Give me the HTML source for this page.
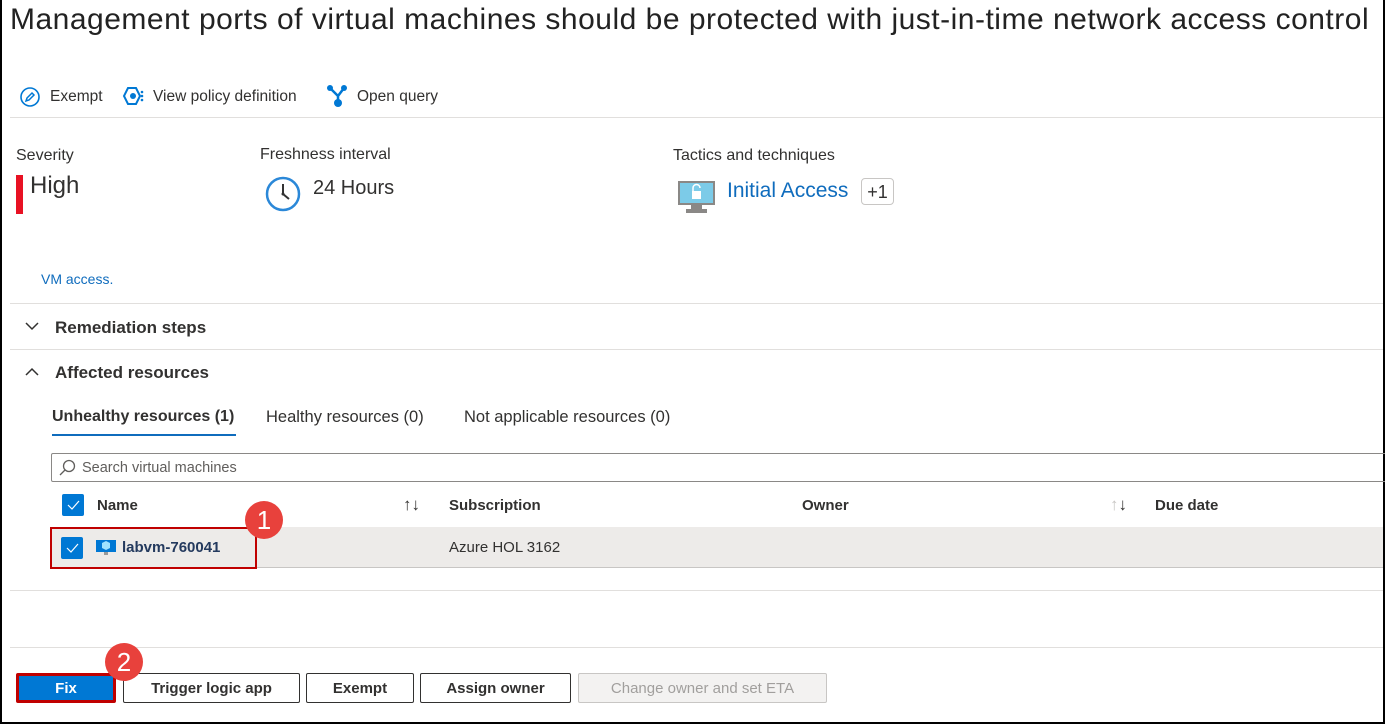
<!DOCTYPE html><html><head><style>
body{margin:0;width:1385px;height:726px;overflow:hidden;background:#fff;font-family:"Liberation Sans",sans-serif;color:#323130;position:relative}
.a{position:absolute;white-space:nowrap}
.frame{position:absolute;left:0;top:0;width:1381px;height:722px;border:2px solid #000;border-top:none}
.hl{position:absolute;height:1px;background:#e1dfdd}
.btn{position:absolute;top:673px;height:30px;border:1px solid #323130;border-radius:2px;font-size:15px;font-weight:bold;text-align:center;line-height:30px;box-sizing:border-box;background:#fff}
.cb{position:absolute;width:22px;height:22px;background:#0078d4;border-radius:2px}
.badge{position:absolute;width:38px;height:38px;border-radius:50%;background:#e8413c;color:#fff;font-size:26px;text-align:center;line-height:38px}
</style></head><body>
<div class="frame"></div>
<div class="a" style="left:10px;top:3px;font-size:30px;letter-spacing:0.5px;color:#222">Management ports of virtual machines should be protected with just-in-time network access control</div>
<svg class="a" style="left:19px;top:86px" width="22" height="22"><circle cx="11" cy="11" r="9" fill="none" stroke="#0078d4" stroke-width="1.6"/><path d="M7 15l1-3 5-5 2 2-5 5z" fill="none" stroke="#0078d4" stroke-width="1.5"/></svg>
<div class="a" style="left:50px;top:88px;font-size:15.5px">Exempt</div>
<svg class="a" style="left:122px;top:85px" width="24" height="22"><path d="M6 3h8l4 8-4 8H6L2 11z" fill="none" stroke="#0078d4" stroke-width="2"/><circle cx="11" cy="11" r="3" fill="#0078d4"/><circle cx="20" cy="7" r="1.3" fill="#0078d4"/><circle cx="20" cy="11" r="1.3" fill="#0078d4"/><circle cx="20" cy="15" r="1.3" fill="#0078d4"/></svg>
<div class="a" style="left:153px;top:88px;font-size:15.5px">View policy definition</div>
<svg class="a" style="left:326px;top:84px" width="22" height="24"><path d="M4 4l8 8M18 4l-6 8M12 12v7" stroke="#0078d4" stroke-width="2.5"/><circle cx="4" cy="4" r="3" fill="#0078d4"/><circle cx="18" cy="4" r="3" fill="#0078d4"/><circle cx="12" cy="19" r="4" fill="#0078d4"/></svg>
<div class="a" style="left:357px;top:88px;font-size:15.5px">Open query</div>
<div class="hl" style="left:10px;top:117px;width:1373px"></div>
<div class="a" style="left:16px;top:147px;font-size:16px">Severity</div>
<div class="a" style="left:16px;top:175px;width:7px;height:39px;background:#e81123"></div>
<div class="a" style="left:30px;top:172px;font-size:24px">High</div>
<div class="a" style="left:260px;top:146px;font-size:16px">Freshness interval</div>
<svg class="a" style="left:265px;top:176px" width="36" height="36"><circle cx="18" cy="18" r="16" fill="#fff" stroke="#2b88d8" stroke-width="2.5"/><path d="M18 8v10l6 5" fill="none" stroke="#333" stroke-width="2"/><circle cx="18" cy="18" r="1.5" fill="#333"/></svg>
<div class="a" style="left:313px;top:177px;font-size:20px">24 Hours</div>
<div class="a" style="left:673px;top:147px;font-size:16px">Tactics and techniques</div>
<svg class="a" style="left:677px;top:180px" width="40" height="35"><rect x="1" y="1" width="37" height="24" fill="#8a8886"/><rect x="3" y="3" width="33" height="20" fill="#7ccbe8"/><rect x="14" y="25" width="11" height="4" fill="#8a8886"/><rect x="9" y="29" width="21" height="4" fill="#8a8886"/><rect x="15" y="11" width="9" height="8" fill="#fff"/><path d="M16 11v-3a3.5 3.5 0 0 1 7 0" fill="none" stroke="#fff" stroke-width="1.5"/></svg>
<div class="a" style="left:727px;top:179px;font-size:21px;color:#0f6cbd">Initial Access</div>
<div class="a" style="left:861px;top:178px;width:33px;height:27px;border:1px solid #c8c6c4;border-radius:4px;font-size:18px;text-align:center;line-height:27px;box-sizing:border-box">+1</div>
<div class="a" style="left:41px;top:271px;font-size:14px;color:#0f6cbd">VM access.</div>
<div class="hl" style="left:10px;top:303px;width:1373px"></div>
<svg class="a" style="left:24px;top:320px" width="16" height="12"><path d="M2 3l6 6 6-6" fill="none" stroke="#323130" stroke-width="1.5"/></svg>
<div class="a" style="left:55px;top:318px;font-size:17px;font-weight:bold">Remediation steps</div>
<div class="hl" style="left:10px;top:349px;width:1373px"></div>
<svg class="a" style="left:24px;top:366px" width="16" height="12"><path d="M2 9l6-6 6 6" fill="none" stroke="#323130" stroke-width="1.5"/></svg>
<div class="a" style="left:55px;top:363px;font-size:17px;font-weight:bold">Affected resources</div>
<div class="a" style="left:52px;top:408px;font-size:16px;font-weight:bold;color:#323130">Unhealthy resources (1)</div>
<div class="a" style="left:52px;top:434px;width:184px;height:2px;background:#0f6cbd"></div>
<div class="a" style="left:266px;top:408px;font-size:16.5px">Healthy resources (0)</div>
<div class="a" style="left:464px;top:408px;font-size:16.5px">Not applicable resources (0)</div>
<div class="a" style="left:51px;top:453px;width:1340px;height:29px;border:1px solid #8a8886;border-radius:2px;box-sizing:border-box"></div>
<svg class="a" style="left:59px;top:459px" width="18" height="18"><circle cx="10" cy="7" r="5.5" fill="none" stroke="#605e5c" stroke-width="1.3"/><path d="M6 11l-5 5" stroke="#605e5c" stroke-width="1.3"/></svg>
<div class="a" style="left:82px;top:460px;font-size:14.5px;color:#605e5c">Search virtual machines</div>
<div class="cb" style="left:62px;top:494px"></div>
<svg class="a" style="left:62px;top:494px" width="22" height="22"><path d="M6 11l4 4 7-8" fill="none" stroke="#fff" stroke-width="1.2"/></svg>
<div class="a" style="left:97px;top:497px;font-size:15px;font-weight:bold">Name</div>
<div class="a" style="left:403px;top:495px;font-size:17px">↑↓</div>
<div class="a" style="left:449px;top:497px;font-size:15px;font-weight:bold">Subscription</div>
<div class="a" style="left:802px;top:497px;font-size:15px;font-weight:bold">Owner</div>
<div class="a" style="left:1110px;top:495px;font-size:17px"><span style="color:#c8c6c4">↑</span>↓</div>
<div class="a" style="left:1155px;top:497px;font-size:15px;font-weight:bold">Due date</div>
<div class="a" style="left:51px;top:527px;width:1332px;height:40px;background:#edebe9;border-bottom:1px solid #c8c6c4"></div>
<div class="cb" style="left:61px;top:537px"></div>
<svg class="a" style="left:61px;top:537px" width="22" height="22"><path d="M6 11l4 4 7-8" fill="none" stroke="#fff" stroke-width="1.2"/></svg>
<svg class="a" style="left:96px;top:539px" width="20" height="18"><rect x="0" y="1" width="20" height="12" fill="#0078d4"/><path d="M10 2l4 2v5l-4 2-4-2V4z" fill="#9fe3ff"/><rect x="8" y="13" width="4" height="3" fill="#999"/></svg>
<div class="a" style="left:122px;top:539px;font-size:15px;font-weight:bold;color:#243a5e">labvm-760041</div>
<div class="a" style="left:449px;top:539px;font-size:15px">Azure HOL 3162</div>
<div class="a" style="left:50px;top:527px;width:207px;height:42px;border:2px solid #c00000;box-sizing:border-box"></div>
<div class="badge" style="left:245px;top:501px">1</div>
<div class="hl" style="left:10px;top:590px;width:1373px"></div>
<div class="hl" style="left:10px;top:647px;width:1373px"></div>
<div class="btn" style="left:16px;width:100px;background:#0078d4;color:#fff;border:3px solid #c00000;line-height:26px">Fix</div>
<div class="btn" style="left:123px;width:177px">Trigger logic app</div>
<div class="btn" style="left:306px;width:108px">Exempt</div>
<div class="btn" style="left:420px;width:151px">Assign owner</div>
<div class="btn" style="left:578px;width:249px;background:#f3f2f1;color:#a19f9d;border-color:#c8c6c4;font-weight:normal">Change owner and set ETA</div>
<div class="badge" style="left:105px;top:643px">2</div>
</body></html>
